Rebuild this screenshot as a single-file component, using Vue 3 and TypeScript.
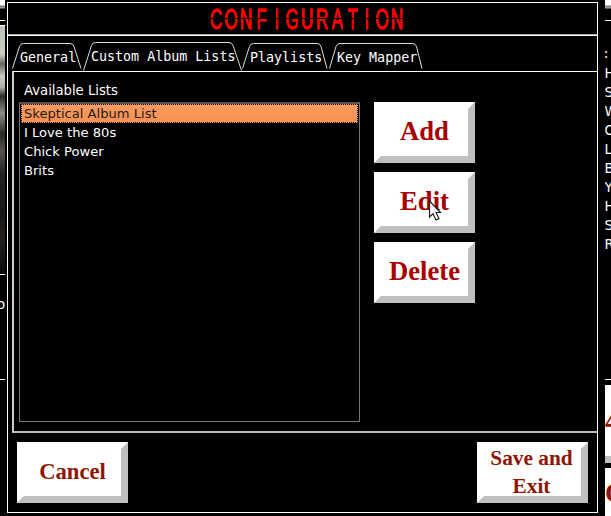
<script setup lang="ts">
import { ref } from 'vue'

interface Tab {
  label: string
  path: string
  line: string
}

const title = 'CONFIGURATION'
const tabs: Tab[] = [
  { label: 'General', path: 'general', line: 'M.5 26.5 L7.5 4.5 Q8.5 1.5 11.5 1.5 H58 Q61 1.5 62 4.5 L69 26.5' },
  { label: 'Custom Album Lists', path: 'albums', line: 'M.5 28.5 L8.5 3.5 Q9.5 .5 12.5 .5 H146 Q149 .5 150 3.5 L158.5 28.5' },
  { label: 'Playlists', path: 'playlists', line: 'M.5 26.5 L7.5 4.5 Q8.5 1.5 11.5 1.5 H75 Q78 1.5 79 4.5 L85 26.5' },
  { label: 'Key Mapper', path: 'keys', line: 'M.5 26.5 L7 4.5 Q8 1.5 11 1.5 H83.5 Q86.5 1.5 87.5 4.5 L93 26.5' },
]
const lists = ['Skeptical Album List', 'I Love the 80s', 'Chick Power', 'Brits']
const actions = ['Add', 'Edit', 'Delete']
const initials = ['H', 'S', 'W', 'C', 'L', 'B', 'Y', 'H', 'S', 'R']
const selected = ref(0)
</script>

<template>
  <main class="screen">
    <aside class="behind-left">
      <div class="light-edge"></div>
      <div class="upper-rule"></div>
      <div class="photo"></div>
      <div class="caption">o</div>
      <div class="lower-rule"></div>
    </aside>

    <section class="dialog">
      <header>
        <h1><span v-for="(letter, i) in title" :key="i">{{ letter }}</span></h1>
      </header>
      <nav>
        <button v-for="tab in tabs" :key="tab.path" class="tab" :class="tab.path">
          <svg aria-hidden="true"><path :d="tab.line" /></svg>
          <span>{{ tab.label }}</span>
        </button>
      </nav>
      <div class="page">
        <div class="lists">
          <label>Available Lists</label>
          <ul>
            <li v-for="(item, i) in lists" :key="item" :class="{ selected: selected === i }" @click="selected = i">{{ item }}</li>
          </ul>
        </div>
        <div class="actions">
          <button v-for="action in actions" :key="action" class="bevel">{{ action }}</button>
          <svg class="cursor" width="14" height="22" viewBox="0 0 14 22" aria-hidden="true">
            <path d="M1.5 1 V17 L5 13.7 L8 20 L11 18.6 L8 12.5 H12.5 Z" />
          </svg>
        </div>
      </div>
      <footer>
        <button class="bevel cancel">Cancel</button>
        <button class="bevel save">Save and<br>Exit</button>
      </footer>
    </section>

    <aside class="behind-right">
      <div class="light-edge"></div>
      <div class="right-rule"></div>
      <div class="colon">:</div>
      <div class="initials"><div v-for="(letter, i) in initials" :key="i">{{ letter }}</div></div>
      <div class="bottom-rule"></div>
      <div class="key four">4</div>
      <div class="key circle">C</div>
    </aside>
  </main>
</template>

<style>
body { background: #000; overflow: hidden; }
</style>

<style scoped>
* { box-sizing: border-box; }
.screen {
  display: grid;
  grid-template-columns: 5px 600px 6px;
  width: 611px;
  height: 516px;
  overflow: hidden;
  background: #000;
  color: #fff;
  font: 13.333px/19px "DejaVu Sans", sans-serif;
}
button { appearance: none; margin: 0; padding: 0; border: 0; background: none; color: inherit; }
.behind-left, .behind-right { overflow: hidden; height: 516px; }
.light-edge { height: 9px; background: linear-gradient(#fff 0 5px, #777 6px, #aaa 8px, #000 9px); }
.upper-rule { height: 17px; background: linear-gradient(transparent 11px, #fff 11px 12px, transparent 12px 16px, #fff 16px); }
.photo {
  height: 248px;
  background: linear-gradient(#bcc2b8 0, #c8cec4 28px, #62665f 38px, #c7ccc3 50px, #aeb3aa 61px, #2c2b28 70px, #8c8e88 87px, #292724 108px, #56534f 125px, #252321 147px, #181614 190px, #24211f 210px, #0c0b0a 248px);
}
.caption { height: 105px; border-top: 1px solid #fff; padding-top: 20px; text-indent: -3px; }
.lower-rule { height: 1px; background: #fff; }

.dialog {
  height: 511px;
  margin: 2px 7px 0 2px;
  border: 1px solid #fff;
  display: flex;
  flex-direction: column;
}
header {
  height: 33px;
  flex: none;
  border-bottom: 1px solid #fff;
  box-shadow: inset 0 -1px #aaa;
}
h1 {
  display: grid;
  grid-template-columns: repeat(13, 15.1px);
  justify-content: start;
  margin: 0;
  padding: 0 0 0 201px;
  font: 29px/32px "Liberation Sans", sans-serif;
}
h1 span {
  justify-self: center;
  height: 32px;
  color: transparent;
  -webkit-text-stroke: 1px #f00;
  background: #f00;
  background-clip: text;
  -webkit-background-clip: text;
  transform: scaleX(.59);
  mask-image: linear-gradient(#000 0 15px, transparent 15px 16px, #000 16px);
}
nav { height: 35px; flex: none; display: flex; padding: 6px 0 0 4px; }
.tab {
  display: grid;
  height: 29px;
  font: 13.333px/29px "DejaVu Sans Mono", monospace;
  text-align: left;
  white-space: nowrap;
}
.tab svg, .tab span { grid-area: 1 / 1; }
.tab svg { width: 100%; height: 29px; overflow: visible; fill: none; stroke: #ddd; stroke-width: 1; }
.tab span { padding-left: 8px; }
.general { width: 70px; }
.albums { width: 159px; margin-left: 1px; }
.playlists { width: 87px; }
.keys { width: 94px; }
.general span, .playlists span, .keys span { padding-top: 1px; }
.page {
  height: 362px;
  margin-left: 4px;
  flex: none;
  display: flex;
  border-left: 2px solid #ccc;
  border-top: 1px solid #fff;
  border-bottom: 2px solid #bbb;
}
.lists { width: 341px; margin: 8px 0 0 5px; }
.lists label { display: block; height: 22px; padding-left: 5px; font-size: 13.2px; line-height: 22px; }
ul { height: 320px; margin: 0; padding: 0 1px; border: 1px solid #777; border-top: 2px solid #555; list-style: none; font-size: 13.1px; }
li { height: 19px; padding-left: 3px; line-height: 19px; }
li.selected { padding-left: 2px; line-height: 17px; border: 1px dotted #000; background: linear-gradient(#ff9b60, #f79052); color: #1c1c1c; }
.actions { position: relative; margin: 30px 0 0 14px; display: flex; flex-direction: column; gap: 9px; }
.bevel {
  width: 101px;
  height: 61px;
  padding-bottom: 4px;
  border: 7px solid;
  border-color: #fff #bfbfbf #bfbfbf #fff;
  background: #fff;
  color: #a90000;
  font: bold 26.667px/28px "Liberation Serif", serif;
}
.cursor { position: absolute; left: 54px; top: 98px; fill: #fff; stroke: #222; stroke-width: 1.2; }
footer { display: flex; justify-content: space-between; padding: 9px 9px 0; }
footer .bevel { width: 111px; padding-bottom: 2px; color: #8f1500; white-space: nowrap; }
footer .cancel { font-size: 22.667px; }
footer .save { display: flex; align-items: center; justify-content: center; padding-right: 2px; font-size: 21.333px; }

.right-rule { height: 35px; background: linear-gradient(transparent 11px, #fff 11px 12px, transparent 12px); }
.colon { height: 19px; text-indent: -3px; font-family: "DejaVu Sans Mono", monospace; color: #ffdda0; }
.initials { height: 316px; padding-top: 1px; text-indent: -.5px; }
.bottom-rule { height: 6px; border-top: 1px solid #fff; }
.key { width: 12px; background: #fff; color: #8f1500; font: bold 27px/72px "Liberation Serif", serif; overflow: hidden; }
.four { height: 78px; border-bottom: 7px solid #bfbfbf; }
.circle { height: 60px; margin-top: 5px; line-height: 50px; }
</style>
